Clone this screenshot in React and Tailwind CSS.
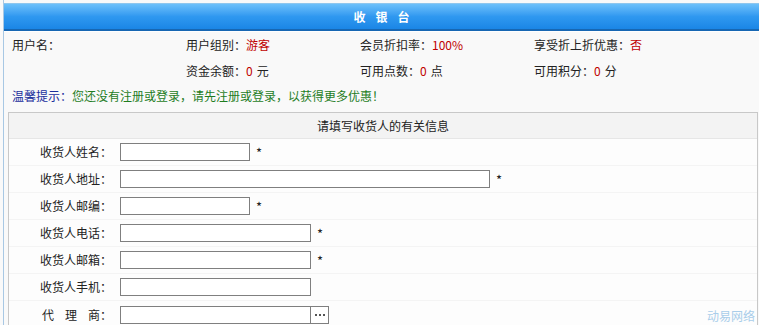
import React from 'react';

const rows = [
  { label: '收货人姓名：', width: 'w-[130px]', star: true },
  { label: '收货人地址：', width: 'w-[370px]', star: true },
  { label: '收货人邮编：', width: 'w-[130px]', star: true },
  { label: '收货人电话：', width: 'w-[191px]', star: true },
  { label: '收货人邮箱：', width: 'w-[191px]', star: true },
  { label: '收货人手机：', width: 'w-[191px]', star: false },
];

function Field({ width }) {
  return <div className={`${width} h-[18px] shrink-0 border border-[#7f7f7f] bg-white`} />;
}

export default function App() {
  return (
    <div className="relative w-[759px] h-[325px] overflow-hidden bg-[#f9f9f9] font-['Noto_Sans_CJK_SC',sans-serif] text-[12px] leading-none text-[#222]">
      <div className="ml-[3px] h-full border-l border-[#a8c8e4] pt-[3px]">
        <div className="h-[28px] flex items-center justify-center bg-gradient-to-b from-[#6cc0fa] via-[#2f98f0] to-[#1a86e6] border-t border-[#8ec6ee] border-b-2 border-b-[#1767b3] text-white font-bold tracking-[10px] pl-[10px]">
          收银台
        </div>
        <div className="h-px bg-white" />

        <div className="grid grid-cols-[174px_174px_174px_1fr] pl-[8px] h-[26px] items-center">
          <div>用户名：</div>
          <div>用户组别：<span className="text-[#c00000]">游客</span></div>
          <div>会员折扣率：<span className="text-[#c00000]">100%</span></div>
          <div>享受折上折优惠：<span className="text-[#c00000]">否</span></div>
        </div>
        <div className="grid grid-cols-[174px_174px_174px_1fr] pl-[8px] h-[26px] items-center">
          <div />
          <div>资金余额：<span className="text-[#c00000] mr-[4px]">0</span>元</div>
          <div>可用点数：<span className="text-[#c00000] mr-[4px]">0</span>点</div>
          <div>可用积分：<span className="text-[#c00000] mr-[4px]">0</span>分</div>
        </div>
        <div className="pl-[8px] h-[24px] flex items-center">
          <span className="text-[#1a2f9c]">温馨提示：</span>
          <span className="text-[#1f7d1f]">您还没有注册或登录，请先注册或登录，以获得更多优惠！</span>
        </div>

        <div className="ml-[4px] mr-[1px] mt-[4px] border border-[#c8c8c8] bg-[#fdfdfd]">
          <div className="h-[26px] flex items-center justify-center bg-[#f3f3f3] border-b border-[#e6e6e6]">
            请填写收货人的有关信息
          </div>
          {rows.map((r) => (
            <div key={r.label} className="h-[27px] flex items-center border-b border-[#f4f4f4]">
              <div className="w-[103px] shrink-0 text-right">{r.label}</div>
              <div className="pl-[8px] flex items-center">
                <Field width={r.width} />
                {r.star && <span className="ml-[6px] text-[13px]">*</span>}
              </div>
            </div>
          ))}
          <div className="h-[27px] flex items-center">
            <div className="w-[103px] shrink-0 text-right">
              <span className="tracking-[11px]">代理</span>商：
            </div>
            <div className="pl-[8px] flex items-center">
              <Field width="w-[191px]" />
              <div className="w-[18px] h-[18px] shrink-0 border border-l-0 border-[#7f7f7f] bg-white flex items-center justify-center gap-[2px]">
                <span className="w-[2px] h-[2px] bg-[#555]" />
                <span className="w-[2px] h-[2px] bg-[#555]" />
                <span className="w-[2px] h-[2px] bg-[#555]" />
              </div>
            </div>
          </div>
        </div>
      </div>
      <div className="absolute right-[4px] bottom-[3px] text-[12px] text-[#a9cdea]">动易网络</div>
    </div>
  );
}
